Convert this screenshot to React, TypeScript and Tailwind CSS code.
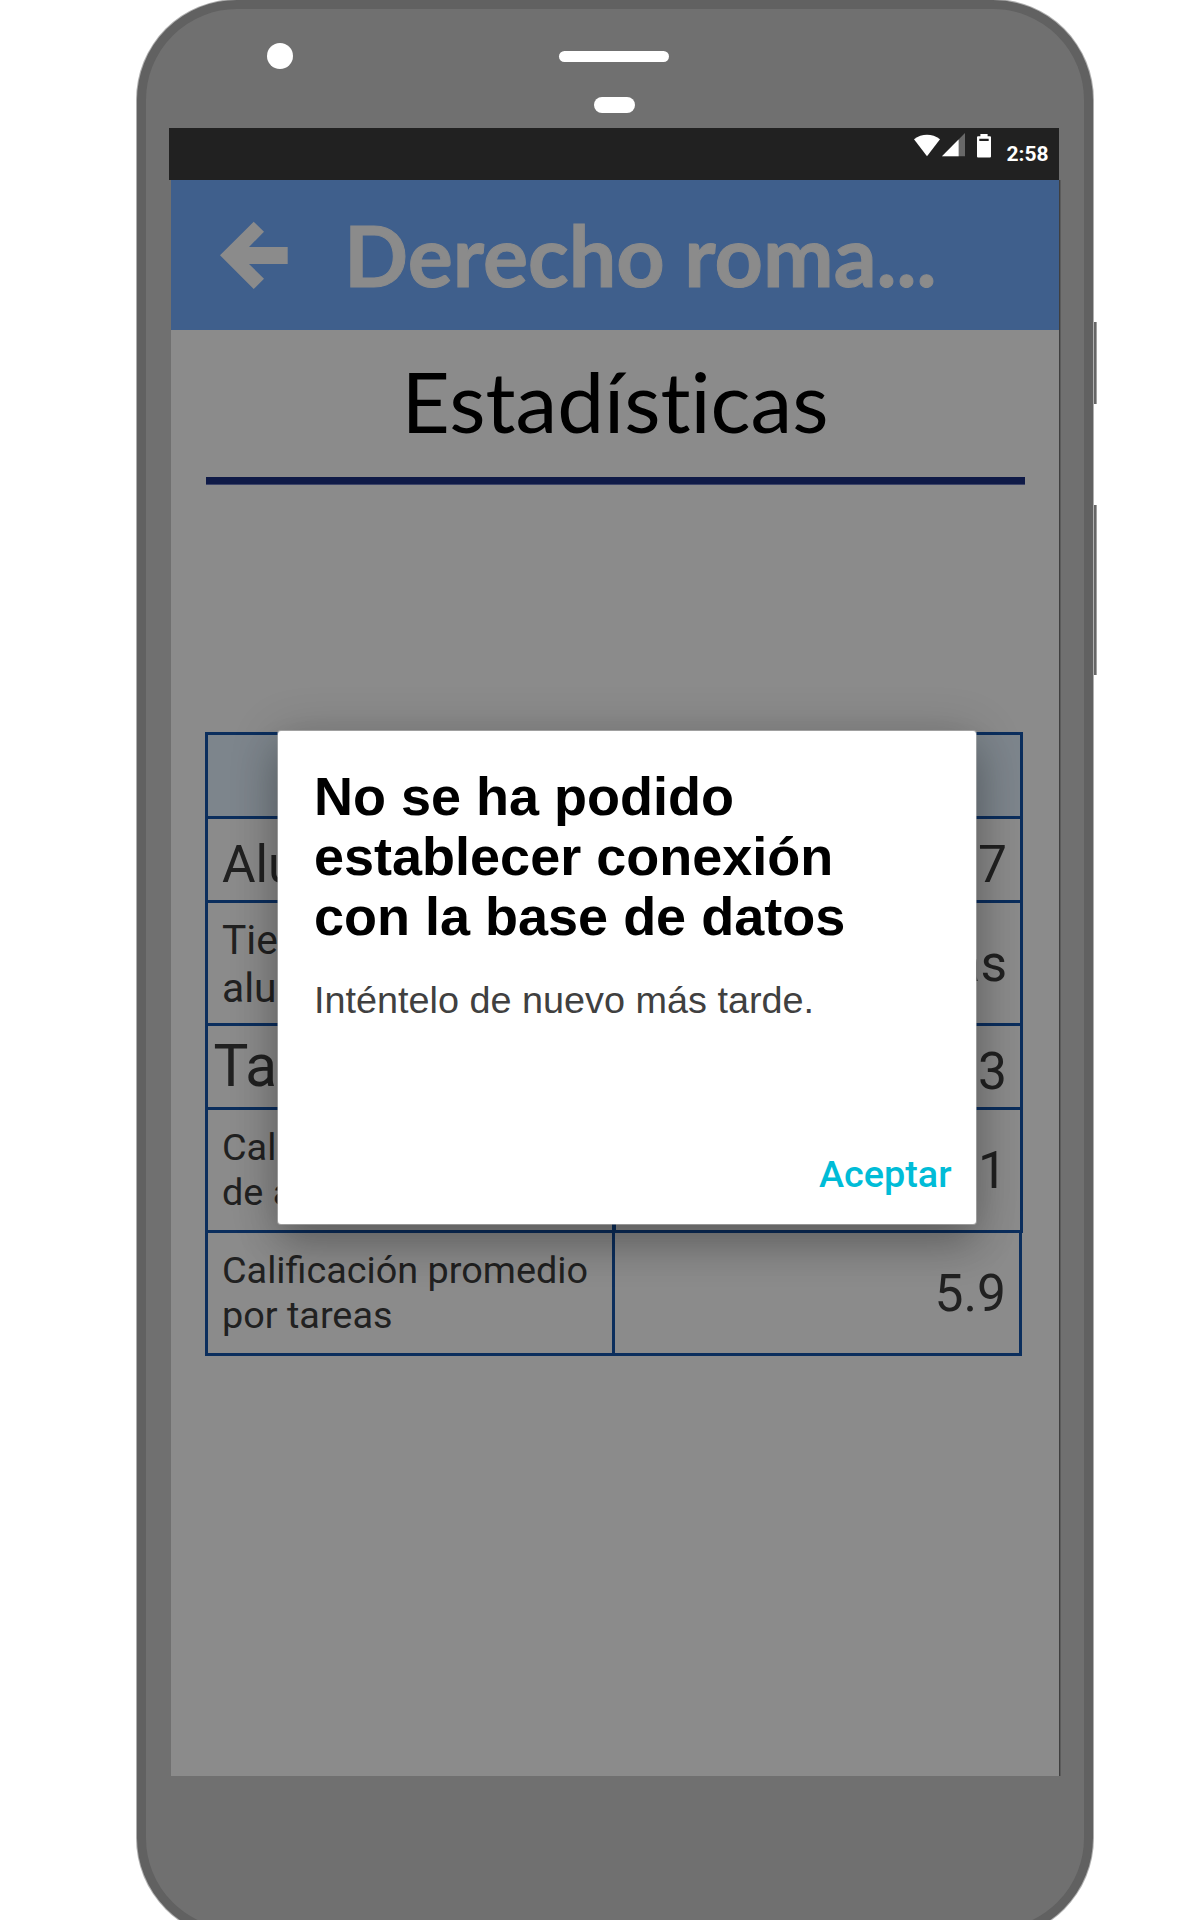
type Row = {
  label: string[];
  value: string;
  height: string;
  labelClass: string;
  valueClass: string;
};

const rows: Row[] = [
  {
    label: ["Alumnos"],
    value: "17",
    height: "h-[84px]",
    labelClass: "pt-[10px] pl-[14px] text-[51.5px] leading-[60px]",
    valueClass: "pt-[10px]",
  },
  {
    label: ["Tiempo por", "alumno"],
    value: "2 horas",
    height: "h-[123px]",
    labelClass: "pt-[3px] pl-[14px] text-[40.8px] leading-[47.5px]",
    valueClass: "pt-[2px]",
  },
  {
    label: ["Tareas"],
    value: "3",
    height: "h-[84px]",
    labelClass: "pb-[2px] pl-[5.5px] text-[58.5px] leading-[70px]",
    valueClass: "pt-[11px]",
  },
  {
    label: ["Calificación media", "de alumnos"],
    value: "6.1",
    height: "h-[123px]",
    labelClass: "pb-[1px] pl-[14px] text-[37.8px] leading-[45px]",
    valueClass: "pt-[2px]",
  },
];

function StatusBar() {
  return (
    <div className="flex h-[52px] w-[890px] justify-end bg-[#212121] pr-[10.5px]">
      <svg className="mt-[4px] mr-[13px]" width="79" height="28" viewBox="0 0 79 28" fill="#fff">
        <path d="M0 7.2C8 1.4 18 1.4 26 7.2L13 24.3Z" />
        <path d="M28 24.3L51 1V24.3Z" opacity="0.32" />
        <path d="M28 24.3L44.6 7.4V24.3Z" />
        <path
          fillRule="evenodd"
          d="M66.4 2H73.6V4.3H76Q77 4.3 77 5.3V24.4Q77 25.4 76 25.4H64Q63 25.4 63 24.4V5.3Q63 4.3 64 4.3H66.4ZM65.3 6.8V9H74.7V6.8Z"
        />
      </svg>
      <span className="mt-[11px] text-[21px] leading-[30px] font-bold text-white">2:58</span>
    </div>
  );
}

function Dialog() {
  return (
    <div className="absolute top-[731px] left-[278px] flex h-[493px] w-[698px] flex-col rounded-[3px] bg-white shadow-[0_0_0_1px_rgba(190,190,190,0.55),0_24px_40px_rgba(0,0,0,0.2),0_4px_50px_rgba(0,0,0,0.2)]">
      <h2 className="mt-[35px] ml-[36px] font-['Liberation_Sans',sans-serif] text-[54px] leading-[60px] font-bold whitespace-nowrap text-black">
        No se ha podido
        <br />
        establecer conexión
        <br />
        con la base de datos
      </h2>
      <p className="mt-[31px] ml-[36px] font-['Liberation_Sans',sans-serif] text-[37.8px] leading-[46px] whitespace-nowrap text-[#404040]">
        Inténtelo de nuevo más tarde.
      </p>
      <button className="mt-[126px] mr-[24.5px] self-end text-[37.8px] leading-[50px] font-medium text-[#00bcd7]">
        Aceptar
      </button>
    </div>
  );
}

export default function App() {
  return (
    <div className="relative h-[1920px] w-[1200px] overflow-hidden bg-white font-['Roboto',sans-serif]">
      <div className="absolute top-[322px] left-[1094px] h-[82px] w-[3px] border-r border-[#a0a0a0] bg-[#666]" />
      <div className="absolute top-[505px] left-[1094px] h-[170px] w-[3px] border-r border-[#a0a0a0] bg-[#666]" />

      <div className="ml-[137px] h-[1938px] w-[956px] rounded-[100px] border-[9px] border-[#616161] bg-[#707070] shadow-[0_0_0_1px_#b0b0b0]">
        <div className="grid h-[119px] grid-cols-3">
          <div className="mt-[34px] ml-[121px] h-[26px] w-[26px] rounded-full bg-white" />
          <div className="flex flex-col items-center">
            <div className="mt-[42px] mr-[1px] h-[11px] w-[110px] rounded-full bg-white" />
            <div className="mt-[35px] h-[16px] w-[41px] rounded-full bg-white" />
          </div>
        </div>

        <div className="ml-[23px] w-[892px]">
          <StatusBar />

          <div className="ml-[2px] h-[1596px] w-[890px] border-r border-[#5c5c5c]">
            <div className="flex h-full flex-col border-r border-[#3f3f3f] bg-[#8b8b8b]">
              <header className="flex h-[150px] bg-[#3f5f8c]">
                <svg className="mt-[41px] ml-[49px]" width="68" height="69" viewBox="0 0 68 69" fill="#8b8b8b">
                  <path d="M0 34.3L33.7 0.7L44 10.7L29 26H67.7V43H29L44 57.7L33.7 68Z" />
                </svg>
                <h1 className="mt-[25px] ml-[56px] font-['Lato',sans-serif] text-[84.4px] leading-[100px] font-bold [word-spacing:-1px] whitespace-nowrap text-[#8b8b8b] [-webkit-text-stroke:1px_#8b8b8b]">
                  Derecho roma...
                </h1>
              </header>

              <h2 className="mt-[21px] text-center font-['Lato',sans-serif] text-[83.8px] leading-[100px] text-black [font-variant-ligatures:none]">
                Estadísticas
              </h2>
              <div className="mt-[26px] ml-[35px] h-[8px] w-[819px] border-b border-[#3d4468] bg-[#0f1a47]" />

              <div className="mt-[247px] ml-[34px] w-[818px] text-[#212121]">
                <div className="h-[84px] border-x-[3px] border-t-[3px] border-[#0b2e5d] bg-[#7d858c]" />
                {rows.map((row) => (
                  <div key={row.label[0]} className={`flex border-x-[3px] border-t-[3px] border-[#0b2e5d] ${row.height}`}>
                    <div
                      className={`flex w-[408px] flex-col justify-center overflow-hidden border-r-[4px] border-[#0b2e5d] whitespace-nowrap ${row.labelClass}`}
                    >
                      {row.label.map((line) => (
                        <span key={line}>{line}</span>
                      ))}
                    </div>
                    <div className={`flex flex-1 items-center justify-end pr-[13px] text-[51.5px] leading-[60px] ${row.valueClass}`}>
                      {row.value}
                    </div>
                  </div>
                ))}
                <div className="border-t-[3px] border-[#0b2e5d]">
                  <div className="flex h-[123px] w-[817px] border-x-[3px] border-b-[3px] border-[#0b2e5d]">
                    <div className="flex w-[407px] flex-col justify-center border-r-[3px] border-[#0b2e5d] pb-[1px] pl-[14px] text-[37.8px] leading-[45px] whitespace-nowrap">
                      <span>Calificación promedio</span>
                      <span>por tareas</span>
                    </div>
                    <div className="flex flex-1 items-center justify-end pt-[2px] pr-[13px] text-[51.5px] leading-[60px]">5.9</div>
                  </div>
                </div>
              </div>
            </div>
          </div>
        </div>
      </div>

      <Dialog />
    </div>
  );
}
